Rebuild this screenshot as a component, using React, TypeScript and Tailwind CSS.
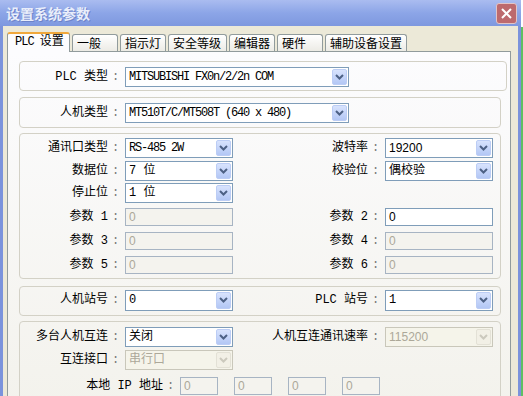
import type { ReactNode } from 'react'

const CJK = "font-['Noto_Sans_CJK_SC',sans-serif]"
const MIX = "font-['Liberation_Mono','Noto_Sans_CJK_SC',monospace]"
const MONO = "font-['Liberation_Mono','Noto_Sans_CJK_SC',monospace] tracking-[-1.2px]"
const SANS = "font-['Liberation_Sans','Noto_Sans_CJK_SC',sans-serif]"

function Chevron({ disabled }: { disabled?: boolean }) {
  return (
    <svg width="9" height="6" viewBox="0 0 9 6">
      <path d="M1 1 L4.5 4.5 L8 1" fill="none" stroke={disabled ? '#cbc9bd' : '#4d6185'} strokeWidth="2" />
    </svg>
  )
}

type ComboProps = {
  value: string
  width?: string
  height?: string
  disabled?: boolean
  font?: string
}

function Combo({ value, width = 'w-[108px]', height = 'h-[20px]', disabled, font = MIX }: ComboProps) {
  return (
    <div
      className={`flex shrink-0 border p-px ${width} ${height} ${
        disabled ? 'border-[#c9c7ba] bg-[#f5f4ea]' : 'border-[#7f9db9] bg-white'
      }`}
    >
      <div
        className={`flex flex-1 items-center overflow-hidden whitespace-nowrap pl-[2px] text-[12px] leading-none ${font} ${
          disabled ? 'text-[#aca899]' : 'text-black'
        }`}
      >
        {value}
      </div>
      <div
        className={`flex w-[15px] items-center justify-center rounded-[2px] border ${
          disabled
            ? 'border-[#e3e1d6] bg-[#f2f0e6]'
            : 'border-[#bccdf5] bg-gradient-to-b from-[#d8e3fd] to-[#b3c7f5]'
        }`}
      >
        <Chevron disabled={disabled} />
      </div>
    </div>
  )
}

function Field({ value, width = 'w-[108px]', disabled }: { value: string; width?: string; disabled?: boolean }) {
  return (
    <div
      className={`flex h-[18px] shrink-0 items-center border pl-[3px] text-[12px] leading-none ${SANS} ${width} ${
        disabled ? 'border-[#a7b4c3] bg-[#f4f3ee] text-[#aca899]' : 'border-[#7f9db9] bg-white text-black'
      }`}
    >
      {value}
    </div>
  )
}

function Label({ text, className = 'w-[105px]' }: { text: string; className?: string }) {
  return (
    <div className={`flex shrink-0 justify-end whitespace-pre text-[12px] leading-[20px] text-black ${MIX} ${className}`}>
      <span>{text}</span>
      <span className="w-[17px] pl-[4px] text-[#777]">:</span>
    </div>
  )
}

function Group({ className, children }: { className: string; children: ReactNode }) {
  return <div className={`rounded-[4px] border border-[#d3d1c6] ${className}`}>{children}</div>
}

const tabs = [
  { label: '一般', w: 'w-[46px]' },
  { label: '指示灯', w: 'w-[46px]' },
  { label: '安全等级', w: 'w-[59px]' },
  { label: '编辑器', w: 'w-[46px]' },
  { label: '硬件', w: 'w-[46px]' },
  { label: '辅助设备设置', w: 'w-[82px]' },
]

export default function App() {
  return (
    <div className="flex h-[396px] w-[523px] overflow-hidden bg-[#ece9d8]">
      <div className="flex w-[521px] shrink-0 flex-col">
        {/* title bar */}
        <div className="flex h-[26px] shrink-0 items-center justify-between bg-gradient-to-b from-[#aabcf0] via-[#8ca5e7] to-[#7e98df] pl-[6px] pr-[4px]">
          <span className={`text-[14px] font-bold text-[#e9eefb] [text-shadow:1px_1px_0_#6d83c9] ${CJK}`}>设置系统参数</span>
          <div className="flex h-[21px] w-[21px] items-center justify-center rounded-[3px] border border-[#e2c4c6] bg-[#bd6a6e]">
            <svg width="11" height="11" viewBox="0 0 11 11">
              <path d="M1 1 L10 10 M10 1 L1 10" stroke="#ffffff" strokeWidth="2" />
            </svg>
          </div>
        </div>

        <div className="flex-1 border-x-[3px] border-x-[#7b93dc] pl-[4px] pt-[6px]">
          {/* tabs */}
          <div className="relative z-10 -mb-px flex h-[20px] items-end gap-[2px]">
            <div className="flex h-[20px] w-[63px] items-start rounded-t-[3px] border-x border-t-2 border-x-[#919b9c] border-t-[#f0a83c] bg-[#fcfcfe] pl-[7px]">
              <span className={`whitespace-pre text-[12px] leading-[16px] text-black ${MIX}`}>
                <span className="tracking-[-1px]">PLC </span>设置
              </span>
            </div>
            {tabs.map((t) => (
              <div
                key={t.label}
                className={`mb-px flex h-[17px] items-center rounded-t-[3px] border border-b-0 border-[#919b9c] bg-gradient-to-b from-white to-[#ecebe5] pl-[4px] ${t.w}`}
              >
                <span className={`text-[12px] leading-none text-black ${CJK}`}>{t.label}</span>
              </div>
            ))}
          </div>

          {/* tab page */}
          <div className="flex h-[360px] w-[504px] flex-col border border-[#919b9c] bg-gradient-to-b from-[#fcfcfe] to-[#f3f2ec] pl-[11px] pt-[9px]">
            <Group className="flex h-[30px] w-[488px] items-start pt-[5px]">
              <Label text="PLC 类型" />
              <Combo value="MITSUBISHI FX0n/2/2n COM" width="w-[224px]" font={MONO} />
            </Group>

            <Group className="mt-[6px] flex h-[31px] w-[482px] items-start pt-[5px]">
              <Label text="人机类型" />
              <Combo value="MT510T/C/MT508T (640 x 480)" width="w-[224px]" font={MONO} />
            </Group>

            <Group className="mt-[5px] flex h-[147px] w-[482px] flex-col pr-[7px] pt-[4px]">
              <div className="flex items-center">
                <Label text="通讯口类型" />
                <Combo value="RS-485 2W" font={MONO} />
                <Label text="波特率" className="flex-1" />
                <Combo value="19200" font={SANS} />
              </div>
              <div className="mt-[3px] flex items-center">
                <Label text="数据位" />
                <Combo value="7 位" />
                <Label text="校验位" className="flex-1" />
                <Combo value="偶校验" />
              </div>
              <div className="mt-[2px] flex items-center">
                <Label text="停止位" />
                <Combo value="1 位" />
              </div>
              <div className="mt-[4px] flex h-[20px] items-center">
                <Label text="参数 1" />
                <Field value="0" disabled />
                <Label text="参数 2" className="flex-1" />
                <Field value="0" />
              </div>
              <div className="mt-[4px] flex h-[20px] items-center">
                <Label text="参数 3" />
                <Field value="0" disabled />
                <Label text="参数 4" className="flex-1" />
                <Field value="0" disabled />
              </div>
              <div className="mt-[4px] flex h-[20px] items-center">
                <Label text="参数 5" />
                <Field value="0" disabled />
                <Label text="参数 6" className="flex-1" />
                <Field value="0" disabled />
              </div>
            </Group>

            <Group className="mt-[7px] flex h-[30px] w-[482px] items-start pr-[7px] pt-[3px]">
              <Label text="人机站号" />
              <Combo value="0" font={MONO} height="h-[21px]" />
              <Label text="PLC 站号" className="flex-1" />
              <Combo value="1" font={MONO} height="h-[21px]" />
            </Group>

            <Group className="mt-[5px] flex h-[90px] w-[482px] flex-col pr-[7px] pt-[5px]">
              <div className="flex items-center">
                <Label text="多台人机互连" />
                <Combo value="关闭" />
                <Label text="人机互连通讯速率" className="flex-1" />
                <Combo value="115200" font={SANS} disabled />
              </div>
              <div className="mt-[3px] flex items-center">
                <Label text="互连接口" />
                <Combo value="串行口" disabled />
              </div>
              <div className="mt-[6px] flex items-center">
                <Label text="本地 IP 地址" className="w-[160px]" />
                <div className="flex gap-[16px]">
                  <Field value="0" width="w-[38px]" disabled />
                  <Field value="0" width="w-[38px]" disabled />
                  <Field value="0" width="w-[38px]" disabled />
                  <Field value="0" width="w-[38px]" disabled />
                </div>
              </div>
            </Group>
          </div>
        </div>
      </div>
      <div className="flex w-[2px] flex-col">
        <div className="h-[27px] bg-white" />
        <div className="flex-1 bg-[#5fbf62]" />
      </div>
    </div>
  )
}
